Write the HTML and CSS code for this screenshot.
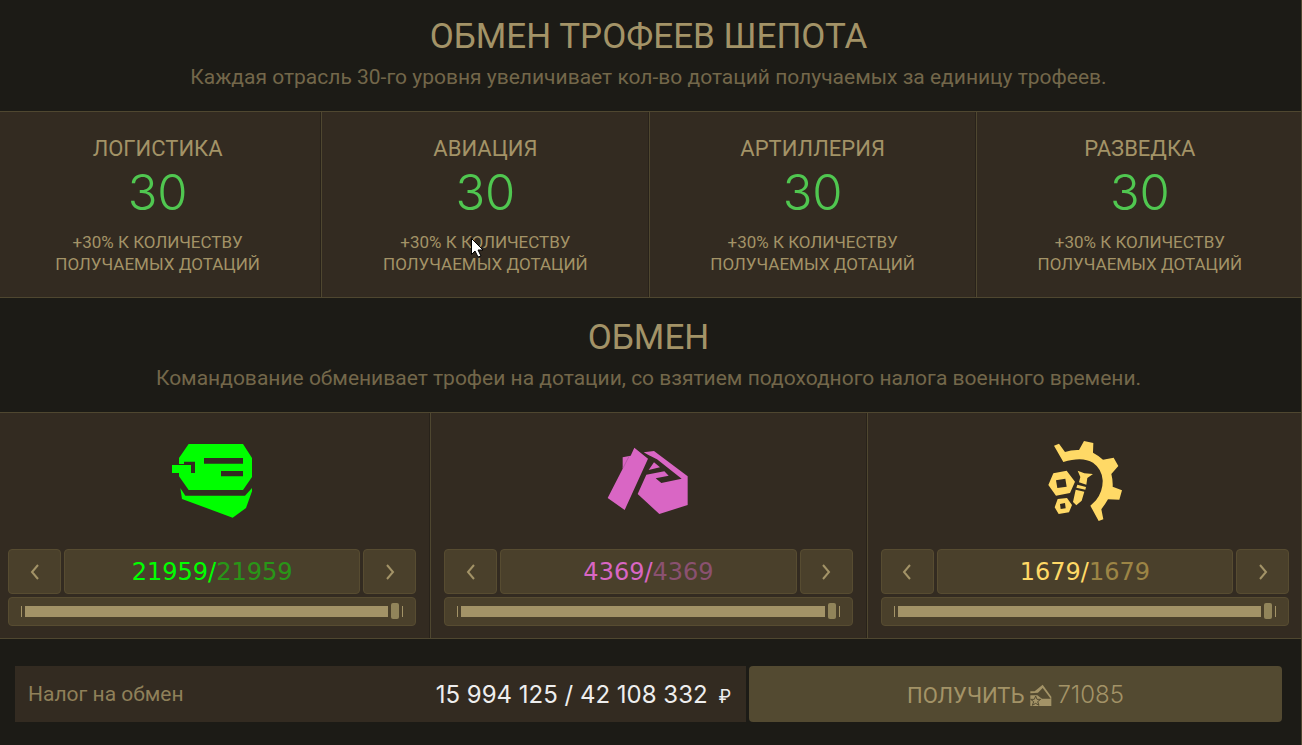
FILE: index.html
```html
<!DOCTYPE html>
<html lang="ru">
<head>
  <meta charset="UTF-8">
  <title>Обмен трофеев</title>
  <link rel="stylesheet" href="styles.css">
</head>
<body>
<div class="page">
  <div class="head">
    <h1>ОБМЕН ТРОФЕЕВ ШЕПОТА</h1>
    <p>Каждая отрасль 30-го уровня увеличивает кол-во дотаций получаемых за единицу трофеев.</p>
  </div>
  <ul class="row branches">
    <li>
      <h2>ЛОГИСТИКА</h2>
      <strong>30</strong>
      <p>+30% К КОЛИЧЕСТВУ<br>ПОЛУЧАЕМЫХ ДОТАЦИЙ</p>
    </li>
    <li>
      <h2>АВИАЦИЯ</h2>
      <strong>30</strong>
      <p>+30% К КОЛИЧЕСТВУ<br>ПОЛУЧАЕМЫХ ДОТАЦИЙ</p>
      <svg class="cursor" viewBox="0 0 12 20" width="12" height="20"><path d="M.5.5v16l3.500-3.500 3 6 3-1-3-6h5z" fill="#fff" stroke="#000"/></svg>
    </li>
    <li>
      <h2>АРТИЛЛЕРИЯ</h2>
      <strong>30</strong>
      <p>+30% К КОЛИЧЕСТВУ<br>ПОЛУЧАЕМЫХ ДОТАЦИЙ</p>
    </li>
    <li>
      <h2>РАЗВЕДКА</h2>
      <strong>30</strong>
      <p>+30% К КОЛИЧЕСТВУ<br>ПОЛУЧАЕМЫХ ДОТАЦИЙ</p>
    </li>
  </ul>
  <div class="head second">
    <h1>ОБМЕН</h1>
    <p>Командование обменивает трофеи на дотации, со взятием подоходного налога военного времени.</p>
  </div>
  <ul class="row trophies">
    <li class="green">
      <svg class="icon" viewBox="-9 0 330 300"><path d="M86 42H249L276 84V141L249 180H86L57 139V129H36V105H93V129H105V95H72V102H57V84ZM132 84V101H249V84ZM183 123V139H249V123ZM61 174L76 197H255L276 174V184L258 234L218 263L66 207Z" fill-rule="evenodd"/></svg>
      <div class="controls">
        <button aria-label="Меньше"><svg viewBox="0 0 10 16"><path d="M8 1L2 8l6 7"/></svg></button>
        <output>21959/<i>21959</i></output>
        <button aria-label="Больше"><svg viewBox="0 0 10 16"><path d="M2 1l6 7-6 7"/></svg></button>
      </div>
      <div class="slider"><input type="range" min="0" max="21959" value="21959" aria-label="Зелёные трофеи"></div>
    </li>
    <li class="pink">
      <svg class="icon" viewBox="-5 0 330 300"><path d="M119 53L160 86L90 240L39 204L84 116V82L108 77ZM147 67L178 63L279 139V225L194 252L129 192L155 134L209 124L222 137L183 145L200 159L261 146L187 88L160 74ZM178 97L196 112L162 120Z"/><path class="seam" d="M103 79L85 114"/></svg>
      <div class="controls">
        <button aria-label="Меньше"><svg viewBox="0 0 10 16"><path d="M8 1L2 8l6 7"/></svg></button>
        <output>4369/<i>4369</i></output>
        <button aria-label="Больше"><svg viewBox="0 0 10 16"><path d="M2 1l6 7-6 7"/></svg></button>
      </div>
      <div class="slider"><input type="range" min="0" max="4369" value="4369" aria-label="Розовые трофеи"></div>
    </li>
    <li class="yellow">
      <svg class="icon" viewBox="-15 0 330 300"><path d="M57 47L72 41L90 66Q110 59 132 60L147 33L175 39L174 68Q191 77 204 89L236 83L250 108L229 132Q234 151 233 170L261 181L253 209L219 208Q210 224 199 238L205 268L191 273L166 227L183 211Q204 184 203 151Q201 117 174 98Q142 78 85 96ZM55 130L95 122L120 155L105 189L63 197L40 165ZM63 151L67 174L95 170L91 146ZM68 207L96 204L111 225L102 247L71 252L59 232ZM75 222L77 237L92 235L90 219ZM128 122L148 130L174 132L157 144L154 164L132 157L136 141ZM127 164L153 171L151 179L124 173ZM122 179L148 185L140 212L124 226L114 216Z" fill-rule="evenodd"/></svg>
      <div class="controls">
        <button aria-label="Меньше"><svg viewBox="0 0 10 16"><path d="M8 1L2 8l6 7"/></svg></button>
        <output>1679/<i>1679</i></output>
        <button aria-label="Больше"><svg viewBox="0 0 10 16"><path d="M2 1l6 7-6 7"/></svg></button>
      </div>
      <div class="slider"><input type="range" min="0" max="1679" value="1679" aria-label="Жёлтые трофеи"></div>
    </li>
  </ul>
  <div class="bottom">
    <div class="tax">
      <span>Налог на обмен</span>
      <b>15 994 125 / 42 108 332 <small>₽</small></b>
    </div>
    <button class="get">ПОЛУЧИТЬ
      <svg viewBox="0 0 66 66"><path d="M1 22H14L38 2L64 38V66H1V34H22L36 44H62L38 12L24 26L1 28Z"/><path class="star" d="M17 36L21 46H32L23 53L27 64L17 58L7 64L11 53L2 46H13Z"/></svg>
      <span>71085</span></button>
  </div>
</div>
</body>
</html>
```

FILE: styles.css
```css
* {
  box-sizing: border-box;
  margin: 0;
  padding: 0;
}

html {
  background: #1c1b16;
  overflow-x: hidden;
}

body {
  color: #a39367;
  font-family: Roboto, "Liberation Sans", sans-serif;
  border-right: 1px solid #4f4730;
  overflow: hidden;
}

.page {
  margin: 0 -2px 0 -6px;
}

.head {
  height: 111px;
  padding-top: 17px;
  text-align: center;
}

.head h1 {
  font-size: 35px;
  line-height: 40px;
  font-weight: 400;
}

.head p {
  margin-top: 6px;
  color: #73674a;
  font-size: 21px;
  line-height: 28px;
}

.second {
  height: 114px;
  padding-top: 20px;
}

.row {
  display: grid;
  list-style: none;
  background: #332b21;
  border: solid #4f4730;
  border-width: 1px 0;
}

.row li {
  position: relative;
}

.row li + li {
  border-left: 1px solid #4f4730;
  box-shadow: -1px 0 #28221a;
}

.branches {
  grid-template-columns: repeat(4, 1fr);
  text-align: center;
}

.branches li {
  padding: 23px 0 22px;
}

.branches h2 {
  font-size: 22px;
  line-height: 28px;
  font-weight: 400;
}

.branches strong {
  display: block;
  color: #50c750;
  font-family: Inter, sans-serif;
  font-size: 49px;
  line-height: 60px;
  font-weight: 300;
}

.branches p {
  margin-top: 8px;
  font-size: 17px;
  line-height: 22px;
}

.cursor {
  position: absolute;
  left: 149px;
  top: 126px;
}

.trophies {
  grid-template-columns: repeat(3, 1fr);
}

.trophies li {
  padding: 17px 14px 12px;
}

.trophies li + li {
  padding-left: 13px;
}

.icon {
  display: block;
  width: 110px;
  height: 100px;
  margin: 0 auto 19px;
  fill: currentColor;
}

.seam {
  stroke: #a8529a;
  stroke-width: 2;
}

.green {
  color: #00ff00;
}

.pink {
  color: #d966c4;
}

.yellow {
  color: #ffd966;
}

.controls {
  display: grid;
  grid-template-columns: 53px 1fr 53px;
  gap: 3px;
}

.controls button, .controls output, .slider {
  background: #4a402b;
  border: 1px solid #574c31;
  border-radius: 4px;
}

.controls button {
  height: 45px;
}

.controls button svg {
  display: block;
  width: 10px;
  height: 16px;
  margin: 0 auto;
  fill: none;
  stroke: #a39367;
  stroke-width: 2;
}

.controls output {
  padding-top: 2px;
  font-family: "DejaVu Sans", sans-serif;
  font-size: 24px;
  line-height: 41px;
  text-align: center;
}

.controls i {
  font-style: normal;
  opacity: .45;
}

.slider {
  display: flex;
  height: 29px;
  margin-top: 3px;
  padding: 0 12px;
  align-items: center;
}

.slider input {
  -webkit-appearance: none;
  appearance: none;
  width: 100%;
  height: 11px;
  padding: 0 3px;
  background: none;
  border: solid #a39367;
  border-width: 0 1px;
}

.slider input::-webkit-slider-runnable-track {
  height: 11px;
  background: linear-gradient(#a39367, #a39367) no-repeat 0 0 / calc(100% - 11px) 100%;
}

.slider input::-webkit-slider-thumb {
  -webkit-appearance: none;
  width: 8px;
  height: 16px;
  margin-top: -3px;
  background: #91845a;
  border-radius: 2px;
}

.bottom {
  display: grid;
  grid-template-columns: 731fr 533fr;
  gap: 3px;
  padding: 27px 21px 23px;
}

.tax {
  display: flex;
  height: 56px;
  padding: 0 15px 0 13px;
  align-items: center;
  justify-content: space-between;
  background: #332b21;
  color: #8f8059;
  font-size: 21px;
}

.tax b {
  color: #eee;
  font-size: 24px;
  font-weight: 400;
  font-family: Inter, sans-serif;
}

.tax small {
  margin-left: 4px;
  font-size: 18px;
}

.get {
  border: 0;
  border-radius: 4px;
  background: #534a31;
  color: #a39367;
  font: 22px Roboto, sans-serif;
}

.get span {
  font-family: Inter, sans-serif;
  font-size: 24px;
  font-weight: 300;
}

.get svg {
  width: 22px;
  height: 22px;
  vertical-align: -3px;
  fill: currentColor;
}

.get .star {
  stroke: #534a31;
  stroke-width: 3;
}
```
